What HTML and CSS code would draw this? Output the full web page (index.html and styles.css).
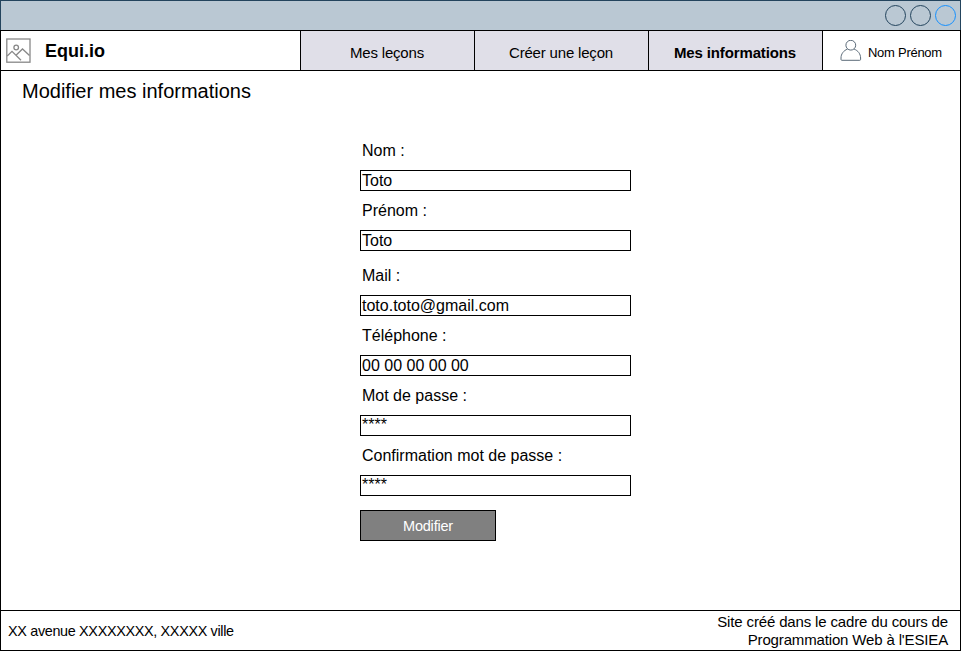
FILE: index.html
```html
<!DOCTYPE html>
<html lang="fr">
<head>
<meta charset="utf-8">
<title>Equi.io</title>
<link rel="stylesheet" href="styles.css">
</head>
<body>
<div class="window">
  <div class="titlebar">
    <svg width="74" height="24" viewBox="0 0 74 24" fill="none" stroke="#23445d">
      <circle cx="12.5" cy="12.5" r="10"/>
      <circle cx="37.5" cy="12.5" r="10"/>
      <circle cx="62.5" cy="12.5" r="10" stroke="#1590ff"/>
    </svg>
  </div>
  <header class="header">
    <div class="brand">
      <svg width="26" height="26" viewBox="0 0 26 26" fill="none" stroke="#888" stroke-width="1.3">
        <rect x="0.8" y="1" width="23.2" height="23.2"/>
        <circle cx="10.2" cy="9.5" r="2.3"/>
        <path d="M1.2 18L6 13.300L15 22.200M10 17.200L16.500 11L23.500 17.500"/>
      </svg>
      <span class="name">Equi.io</span>
    </div>
    <nav class="nav">
      <a class="tab">Mes leçons</a>
      <a class="tab">Créer une leçon</a>
      <a class="tab active">Mes informations</a>
    </nav>
    <div class="user">
      <svg width="22" height="22" viewBox="0 0 22 22" fill="none" stroke="#5c6b79">
        <circle cx="10.8" cy="5.2" r="4.9"/>
        <path d="M7.5 9.1C3.6 10.500 1 14 1 18V19.400Q1 20.300 1.800 20.300H19.800Q20.600 20.300 20.600 19.400V18C20.600 14 18 10.500 14.100 9.100"/>
      </svg>
      <span>Nom Prénom</span>
    </div>
  </header>
  <main class="main">
    <h1>Modifier mes informations</h1>
    <form class="form">
      <label>Nom :</label><div class="field">Toto</div>
      <label>Prénom :</label><div class="field last">Toto</div>
      <label>Mail :</label><div class="field">toto.toto@gmail.com</div>
      <label>Téléphone :</label><div class="field">00 00 00 00 00</div>
      <label>Mot de passe :</label><div class="field secret">****</div>
      <label>Confirmation mot de passe :</label><div class="field secret">****</div>
      <button type="button">Modifier</button>
    </form>
  </main>
  <footer class="footer">
    <span class="address">XX avenue XXXXXXXX, XXXXX ville</span>
    <span class="credit">Site créé dans le cadre du cours de<br>Programmation Web à l'ESIEA</span>
  </footer>
</div>
</body>
</html>
```
FILE: styles.css
```css
* { box-sizing: border-box; }
body {
  margin: 0;
  background: #fff;
  color: #000;
  font-family: "Liberation Sans", Arial, sans-serif;
}
.window {
  width: 961px;
  height: 651px;
  display: flex;
  flex-direction: column;
  overflow: hidden;
}
.titlebar {
  height: 30px;
  border: 1px solid #23445d;
  border-bottom: 0;
  background: #bac8d3;
  display: flex;
  justify-content: flex-end;
  padding: 2px 3px 0 0;
}
.header {
  height: 41px;
  border: 1px solid #000;
  display: flex;
}
.brand {
  width: 299px;
  display: flex;
  align-items: center;
  padding-left: 5px;
}
.name {
  margin-left: 13px;
  padding-top: 2px;
  font-size: 18px;
  font-weight: bold;
}
.nav { display: flex; }
.tab {
  width: 174px;
  padding-right: 1px;
  border-left: 1px solid #000;
  background: #e0dfe8;
  font-size: 15px;
  line-height: 43px;
  letter-spacing: -0.18px;
  text-align: center;
}
.active {
  font-weight: bold;
  letter-spacing: -0.14px;
}
.user {
  flex: 1;
  border-left: 1px solid #000;
  display: flex;
  align-items: flex-start;
  padding: 9px 0 0 16.5px;
  font-size: 13px;
  line-height: 25px;
  letter-spacing: -0.27px;
}
.user span { margin-left: 6.5px; }
.main {
  flex: 1;
  border: solid #000;
  border-width: 0 1px;
}
h1 {
  margin: 0 0 0 21px;
  padding-top: 8px;
  font-size: 20px;
  font-weight: normal;
  line-height: 24px;
  height: 69px;
}
.form {
  width: 271px;
  margin-left: 359px;
  font-size: 16px;
}
.form label {
  display: block;
  height: 30px;
  padding-left: 2px;
  line-height: 21px;
}
.field {
  height: 21px;
  margin-bottom: 9px;
  border: 1px solid #000;
  padding-left: 1px;
  line-height: 19px;
}
.last { margin-bottom: 14px; }
.secret { line-height: 17px; }
button {
  display: block;
  width: 136px;
  height: 31px;
  margin-top: 14px;
  padding: 0;
  border: 1px solid #000;
  background: #808080;
  color: #fff;
  font: 14.5px "Liberation Sans", Arial, sans-serif;
  letter-spacing: -0.2px;
}
.footer {
  height: 41px;
  border: 1px solid #000;
  display: flex;
  justify-content: space-between;
  padding: 0 12px 0 7px;
  font-size: 15px;
  line-height: 39px;
}
.address {
  font-size: 14.4px;
  line-height: 41px;
  letter-spacing: -0.33px;
}
.credit {
  padding-top: 2px;
  line-height: 18px;
  letter-spacing: -0.15px;
  text-align: right;
}
```
